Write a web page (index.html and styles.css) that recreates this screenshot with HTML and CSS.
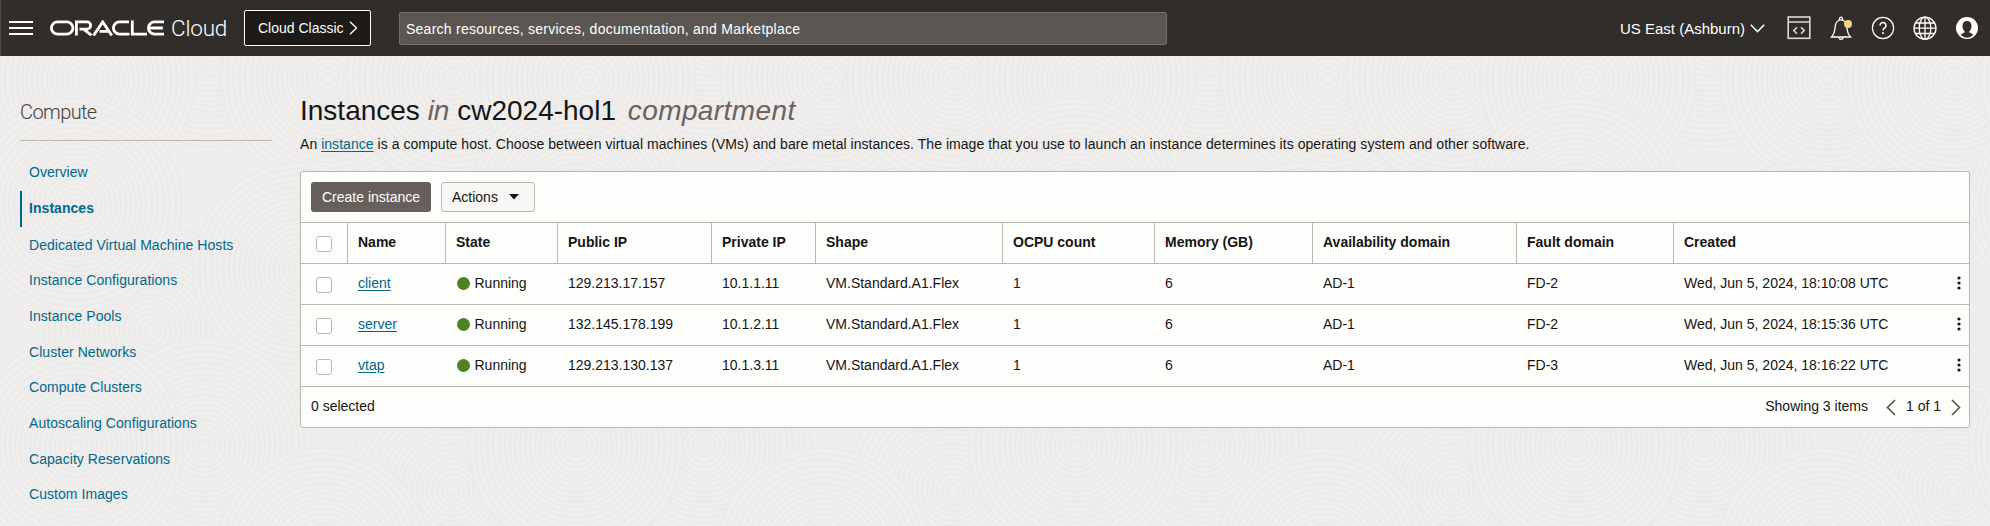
FILE: index.html
```html
<!DOCTYPE html>
<html lang="en">
<head>
<meta charset="utf-8">
<title>Instances - Oracle Cloud</title>
<link rel="stylesheet" href="styles.css">
</head>
<body>
<svg class="texture" width="1990" height="526" aria-hidden="true">
  <defs>
    <g id="swirl" fill="none" stroke="#eae9e7" stroke-width="1.600">
      <circle r="108" fill="#efeeec" stroke="none"/>
      <circle r="6"/><circle r="11"/><circle r="16"/><circle r="21"/><circle r="26"/><circle r="31"/><circle r="36"/><circle r="41"/><circle r="46"/><circle r="51"/><circle r="56"/><circle r="61"/><circle r="66"/><circle r="71"/><circle r="77"/><circle r="83"/><circle r="89"/><circle r="95"/><circle r="101"/><circle r="107"/>
    </g>
    <g id="tile">
      <use href="#swirl" x="390" y="200"/>
      <use href="#swirl" x="210" y="40"/>
      <use href="#swirl" x="328" y="79"/>
      <use href="#swirl" x="454" y="79"/>
      <use href="#swirl" x="88" y="80"/>
      <use href="#swirl" x="150" y="330"/>
      <use href="#swirl" x="300" y="270"/>
      <use href="#swirl" x="75" y="205"/>
      <use href="#swirl" x="204" y="446"/>
      <use href="#swirl" x="453" y="490"/>
      <use href="#swirl" x="76" y="446"/>
      <use href="#swirl" x="323" y="555"/>
    </g>
    <pattern id="waves" width="500" height="526" patternUnits="userSpaceOnUse">
      <use href="#tile" x="-500"/><use href="#tile"/><use href="#tile" x="500"/>
    </pattern>
  </defs>
  <rect width="1990" height="526" fill="url(#waves)"/>
</svg>

<header class="topbar">
  <svg class="menu" width="24" height="14" viewBox="0 0 24 14"><path d="M0 1h24M0 7h24M0 13h24" stroke="#fff" stroke-width="2"/></svg>
  <div class="brand">
    <svg class="brand-mark" role="img" aria-label="ORACLE" width="115" height="16" viewBox="0 0 115 16" fill="none" stroke="#fff" stroke-width="2.800">
      <rect x="1.400" y="1.900" width="21.500" height="12.200" rx="6.100"/>
      <path d="M26.400 15.500V1.900H37a3.600 3.600 0 0 1 0 7.200H29.500M33.500 9.100l8 6.200"/>
      <path d="M43.500 15.500L52.700 1.900 61.800 15.500M49.500 11.300h9.500"/>
      <path d="M79 1.900H69.500a6.100 6.100 0 0 0 0 12.200H79.500"/>
      <path d="M82.300 .5V14.100H97"/>
      <path d="M114 1.900h-9.500a6.100 6.100 0 0 0 0 12.200h9.500M99.500 8h13.300"/>
    </svg>
    <span class="brand-name">Cloud</span>
  </div>
  <button class="classic">Cloud Classic
    <svg width="9" height="14" viewBox="0 0 9 14"><path d="M1 .7L7.500 7 1 13.300" fill="none" stroke="#fff" stroke-width="1.300"/></svg>
  </button>
  <div class="search">Search resources, services, documentation, and Marketplace</div>
  <div class="region">US East (Ashburn)
    <svg width="15" height="9" viewBox="0 0 15 9"><path d="M.8 .8L7.500 7.600 14.200 .8" fill="none" stroke="#fff" stroke-width="1.500"/></svg>
  </div>
  <div class="tools">
    <svg width="24" height="24" viewBox="0 0 24 24" fill="none" stroke="#dddbd9" stroke-width="1.600"><rect x="1.200" y="1" width="21.600" height="21.300"/><path d="M1 6h22M10 11.300l-3.200 3.200L10 17.700M14 11.300l3.200 3.200L14 17.700"/></svg>
    <svg width="24" height="24" viewBox="0 0 24 24" fill="none" stroke="#fff" stroke-width="1.300"><path d="M2.500 21h19c-2.800-3-3.300-5.400-3.600-9.800C17.600 6.800 15.200 3.800 12 3.800S6.400 6.800 6.100 11.200C5.800 15.600 5.300 18 2.500 21zM10 21.300a2 2 0 0 0 4 0M10.500 3.800V2.700a1.500 1.500 0 0 1 3 0v1.100"/><circle cx="19" cy="8" r="4" fill="#f8d583" stroke="none"/></svg>
    <svg width="24" height="24" viewBox="0 0 24 24" fill="none" stroke="#fff" stroke-width="1.200"><circle cx="12" cy="12" r="10.600"/><path d="M9 9.500a3 3 0 1 1 4.700 2.400c-1.200.8-1.700 1.300-1.700 2.600" stroke-width="1.500"/><circle cx="12" cy="17" r="1" fill="#fff" stroke="none"/></svg>
    <svg width="24" height="24" viewBox="0 0 24 24" fill="none" stroke="#fff" stroke-width="1.300"><circle cx="12" cy="12.200" r="11"/><ellipse cx="12" cy="12.200" rx="5.800" ry="11"/><path d="M12 1v22.300M3 7h18M1 12.200h22M3 17.500h18"/></svg>
    <svg width="24" height="24" viewBox="0 0 24 24"><circle cx="12" cy="12" r="11" fill="#fff"/><path d="M12 5c-2.900 0-4.500 2-4.500 4.900 0 2.500.9 4.300 2.200 5.300v1.200c-1.300.5-2.700.9-4 2.300A9.300 9.300 0 0 0 12 21.800a9.300 9.300 0 0 0 6.300-3.100c-1.300-1.400-2.700-1.800-4-2.300v-1.200c1.300-1 2.200-2.800 2.200-5.300C16.500 7 14.900 5 12 5z" fill="#312d2a"/></svg>
  </div>
</header>

<div class="page">
  <nav class="sidebar">
    <h2>Compute</h2>
    <a>Overview</a>
    <a class="current">Instances</a>
    <a>Dedicated Virtual Machine Hosts</a>
    <a>Instance Configurations</a>
    <a>Instance Pools</a>
    <a>Cluster Networks</a>
    <a>Compute Clusters</a>
    <a>Autoscaling Configurations</a>
    <a>Capacity Reservations</a>
    <a>Custom Images</a>
  </nav>
  <main>
    <h1>Instances <em>in</em> cw2024-hol1 <em class="kind">compartment</em></h1>
    <p class="intro">An <a>instance</a> is a compute host. Choose between virtual machines (VMs) and bare metal instances. The image that you use to launch an instance determines its operating system and other software.</p>
    <section class="panel">
      <div class="actions">
        <button class="primary">Create instance</button>
        <button class="secondary">Actions <svg width="10" height="6" viewBox="0 0 10 6"><path d="M0 0h10L5 5.500z" fill="#161513"/></svg></button>
      </div>
      <div class="row head">
        <div><i class="check"></i></div><div>Name</div><div>State</div><div>Public IP</div><div>Private IP</div><div>Shape</div><div>OCPU count</div><div>Memory (GB)</div><div>Availability domain</div><div>Fault domain</div><div>Created</div>
      </div>
      <div class="row">
        <div><i class="check"></i></div><div><a>client</a></div><div><i class="dot"></i>Running</div><div>129.213.17.157</div><div>10.1.1.11</div><div>VM.Standard.A1.Flex</div><div>1</div><div>6</div><div>AD-1</div><div>FD-2</div><div class="last">Wed, Jun 5, 2024, 18:10:08 UTC<svg width="4" height="14" viewBox="0 0 4 14"><circle cx="2" cy="2" r="1.600"/><circle cx="2" cy="7" r="1.600"/><circle cx="2" cy="12" r="1.600"/></svg></div>
      </div>
      <div class="row">
        <div><i class="check"></i></div><div><a>server</a></div><div><i class="dot"></i>Running</div><div>132.145.178.199</div><div>10.1.2.11</div><div>VM.Standard.A1.Flex</div><div>1</div><div>6</div><div>AD-1</div><div>FD-2</div><div class="last">Wed, Jun 5, 2024, 18:15:36 UTC<svg width="4" height="14" viewBox="0 0 4 14"><circle cx="2" cy="2" r="1.600"/><circle cx="2" cy="7" r="1.600"/><circle cx="2" cy="12" r="1.600"/></svg></div>
      </div>
      <div class="row">
        <div><i class="check"></i></div><div><a>vtap</a></div><div><i class="dot"></i>Running</div><div>129.213.130.137</div><div>10.1.3.11</div><div>VM.Standard.A1.Flex</div><div>1</div><div>6</div><div>AD-1</div><div>FD-3</div><div class="last">Wed, Jun 5, 2024, 18:16:22 UTC<svg width="4" height="14" viewBox="0 0 4 14"><circle cx="2" cy="2" r="1.600"/><circle cx="2" cy="7" r="1.600"/><circle cx="2" cy="12" r="1.600"/></svg></div>
      </div>
      <div class="foot">
        <span>0 selected</span>
        <span class="count">Showing 3 items</span>
        <svg width="10" height="17" viewBox="0 0 10 17"><path d="M9 1L1.500 8.500 9 16"/></svg>
        <span class="pages">1 of 1</span>
        <svg width="10" height="17" viewBox="0 0 10 17"><path d="M1 1l7.500 7.500L1 16"/></svg>
      </div>
    </section>
  </main>
</div>
</body>
</html>
```
FILE: styles.css
```css
* { box-sizing: border-box; }
body {
  margin: 0;
  height: 526px;
  overflow: hidden;
  background: #efeeec;
  color: #161513;
  font: 14px/20px "Liberation Sans", Arial, sans-serif;
}
svg { display: block; flex: none; }
button { font: inherit; margin: 0; }
a { color: #00688c; }

.texture { position: absolute; inset: 0; z-index: -1; }

.topbar {
  display: flex;
  align-items: center;
  height: 56px;
  padding: 0 11px 0 8px;
  background: #312d2a;
  border-left: 1px solid #4a4643;
  color: #fff;
}
.brand { display: flex; align-items: center; gap: 6px; margin-left: 17px; }
.brand-name { width: 56px; font: 300 22.5px/24px Roboto, "Liberation Sans", sans-serif; letter-spacing: -0.2px; color: #fff; }
.classic {
  display: flex;
  align-items: center;
  gap: 5px;
  width: 127px;
  height: 36px;
  margin-left: 17px;
  padding: 0 0 0 13px;
  border: 1px solid #fff;
  border-radius: 2px;
  background: #1e1a17;
  color: #fff;
}
.search {
  width: 768px;
  height: 33px;
  margin-left: 28px;
  padding: 1px 6px 0;
  border: 1px solid #76706b;
  border-radius: 2px;
  background: #5b5652;
  line-height: 31px;
  letter-spacing: 0.25px;
}
.region { display: flex; align-items: center; gap: 5px; margin-left: auto; padding-top: 1px; font-size: 15px; }
.tools { display: flex; gap: 18px; margin-left: 22px; }

.page { display: flex; }
.sidebar { width: 252px; margin-left: 20px; letter-spacing: 0.05px; }
.sidebar h2 {
  height: 85px;
  margin: 0 0 13px;
  padding-top: 45px;
  border-bottom: 1px solid #bcb6b1;
  color: #45403c;
  font: 300 20px/22px Roboto, "Liberation Sans", sans-serif;
  letter-spacing: -0.6px;
}
.sidebar a { display: flex; align-items: center; height: 35.7px; padding-left: 9px; }
.sidebar .current { height: 36px; margin-top: 1px; padding: 0 0 1px 7px; border-left: 2px solid #00688c; font-weight: 700; }

main { width: 1670px; margin-left: 28px; padding-top: 37px; }
h1 { margin: 0; font-size: 28px; font-weight: 400; line-height: 36px; }
h1 em { color: #6b625e; }
.kind { margin-left: 4px; letter-spacing: 0.4px; }
.intro { margin: 5px 0 17px; white-space: nowrap; letter-spacing: 0.042px; }
.intro a, .row a { text-decoration: underline; text-underline-offset: 2px; }

.panel { border: 1px solid #bcb6b1; border-radius: 3px; background: #fdfdfb; }
.actions { display: flex; gap: 10px; height: 50px; padding: 10px; }
.actions button { height: 30px; border-radius: 3px; padding: 0; }
.primary { width: 120px; border: 0; background: #665f5b; color: #fff; }
.secondary { display: flex; align-items: center; gap: 11px; width: 94px; border: 1px solid #bcb6b1; background: #f7f6f4; color: #161513; }
.actions .secondary { padding-left: 10px; }

.row {
  display: grid;
  grid-template-columns: 47px 98px 112px 154px 104px 187px 152px 158px 204px 157px 1fr;
  height: 41px;
  border-top: 1px solid #bcb6b1;
}
.row > div { display: flex; align-items: center; padding: 0 0 2px 10px; white-space: nowrap; }
.row > div:first-child { padding: 2px 0 0 15px; }
.head { font-weight: 700; }
.head > div:not(:last-child) { border-right: 1px solid #bcb6b1; }
.check { width: 16px; height: 16px; border: 1px solid #bcb6b1; border-radius: 3px; background: #fff; }
.dot { width: 13px; height: 13px; margin: 1px 5px 0 0.5px; border-radius: 50%; background: #508223; }
.last svg { margin-left: auto; margin-right: 8.500px; fill: #161513; }
.foot { display: flex; align-items: center; height: 41px; padding: 0 8px 2px 10px; border-top: 1px solid #bcb6b1; }
.foot svg { margin-top: 3px; fill: none; stroke: #5b5652; stroke-width: 1.700; }
.count { margin-left: auto; margin-right: 18px; }
.pages { margin: 0 10px; }
```
